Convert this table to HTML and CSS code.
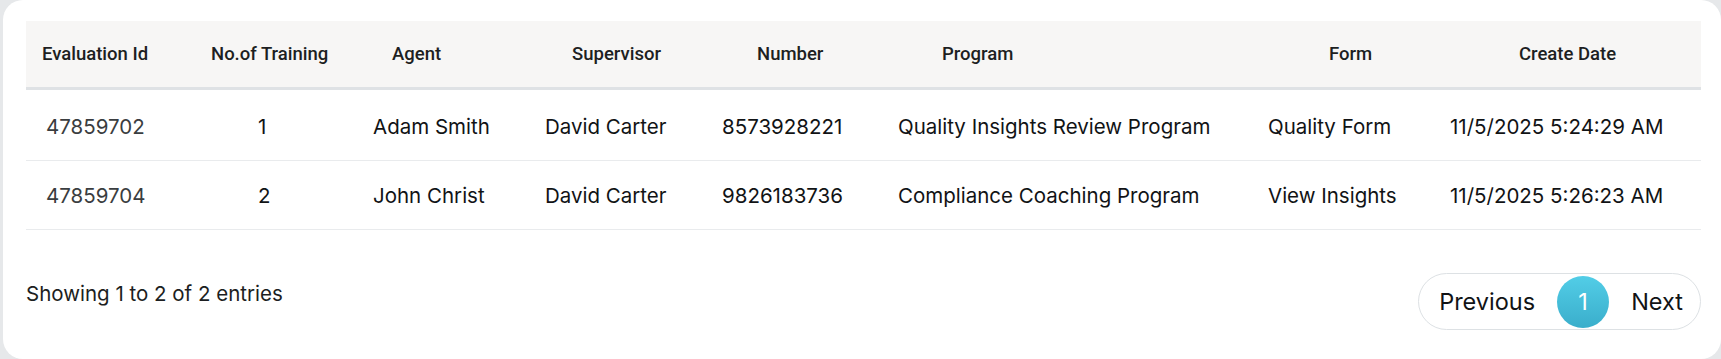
FILE: index.html
```html
<!DOCTYPE html>
<html>
<head>
<meta charset="utf-8">
<link rel="stylesheet" href="styles.css">
</head>
<body>
<div class="card">
  <table class="grid">
    <colgroup>
      <col class="c1"><col class="c2"><col class="c3"><col class="c4"><col class="c5"><col class="c6"><col class="c7"><col class="c8">
    </colgroup>
    <thead>
      <tr>
        <th>Evaluation Id</th>
        <th>No.of Training</th>
        <th>Agent</th>
        <th>Supervisor</th>
        <th>Number</th>
        <th>Program</th>
        <th>Form</th>
        <th>Create Date</th>
      </tr>
    </thead>
    <tbody>
      <tr>
        <td class="id">47859702</td>
        <td>1</td>
        <td>Adam Smith</td>
        <td>David Carter</td>
        <td>8573928221</td>
        <td>Quality Insights Review Program</td>
        <td>Quality Form</td>
        <td>11/5/2025 5:24:29 AM</td>
      </tr>
      <tr>
        <td class="id">47859704</td>
        <td>2</td>
        <td>John Christ</td>
        <td>David Carter</td>
        <td>9826183736</td>
        <td>Compliance Coaching Program</td>
        <td>View Insights</td>
        <td>11/5/2025 5:26:23 AM</td>
      </tr>
    </tbody>
  </table>
  <div class="footer">
    <div class="info">Showing 1 to 2 of 2 entries</div>
    <div class="pager">
      <span class="pg-link">Previous</span>
      <span class="pg-current">1</span>
      <span class="pg-link">Next</span>
    </div>
  </div>
</div>
</body>
</html>
```

FILE: styles.css
```css
html, body {
  margin: 0;
  padding: 0;
  background: #e6e8ea;
}
body {
  width: 1721px;
  height: 359px;
  overflow: hidden;
  font-family: Inter, "Noto Sans", sans-serif;
  color: #16181b;
}
.card {
  margin-left: 3px;
  height: 359px;
  box-sizing: border-box;
  background: #ffffff;
  border-radius: 20px;
  padding: 21px 20px 0 23px;
}
.grid {
  width: 1675px;
  border-collapse: collapse;
  table-layout: fixed;
}
.c1 { width: 168px; }
.c2 { width: 172px; }
.c3 { width: 165px; }
.c4 { width: 170px; }
.c5 { width: 180px; }
.c6 { width: 360px; }
.c7 { width: 180px; }
.c8 { width: 280px; }

.grid th {
  background: #f7f6f5;
  height: 66px;
  padding: 0;
  border-bottom: 3px solid #dfe2e5;
  font-family: Roboto, "Liberation Sans", sans-serif;
  font-weight: 500;
  font-size: 18.5px;
  color: #1d1f22;
  text-align: left;
  white-space: nowrap;
}
.grid td {
  height: 67px;
  padding: 0;
  border-bottom: 1px solid #e9ebed;
  font-size: 20.5px;
  color: #111315;
  text-align: left;
  white-space: nowrap;
}
.grid tbody tr:first-child td {
  height: 68px;
  padding-top: 2px;
}
.grid tbody tr:last-child td {
  height: 68px;
}
.grid td.id { color: #3a3d40; }

/* horizontal text offsets per column (header / body) */
.grid th:nth-child(1) { padding-left: 16px; }
.grid td:nth-child(1) { padding-left: 20px; }
.grid th:nth-child(2) { padding-left: 17px; }
.grid td:nth-child(2) { padding-left: 64px; }
.grid th:nth-child(3) { padding-left: 26px; }
.grid td:nth-child(3) { padding-left: 7px; }
.grid th:nth-child(4) { padding-left: 41px; }
.grid td:nth-child(4) { padding-left: 14px; }
.grid th:nth-child(5) { padding-left: 56px; }
.grid td:nth-child(5) { padding-left: 21px; }
.grid th:nth-child(6) { padding-left: 61px; }
.grid td:nth-child(6) { padding-left: 17px; }
.grid th:nth-child(7) { padding-left: 88px; }
.grid td:nth-child(7) { padding-left: 27px; }
.grid th:nth-child(8) { padding-left: 98px; }
.grid td:nth-child(8) { padding-left: 29px; }

.footer {
  display: flex;
  justify-content: space-between;
  align-items: center;
  margin-top: 43px;
}
.info {
  font-size: 20.5px;
  color: #1c1e21;
  margin-left: 0;
  margin-top: -16px;
}
.pager {
  display: flex;
  align-items: center;
  height: 57px;
  box-sizing: border-box;
  border: 1px solid #dde1e4;
  border-radius: 29px;
  padding: 0 17px 0 20px;
  font-size: 23.5px;
  color: #111315;
}
.pg-link {
  line-height: 1;
}
.pg-current {
  width: 52px;
  height: 52px;
  border-radius: 50%;
  margin: 0 22px;
  display: flex;
  align-items: center;
  justify-content: center;
  color: #ffffff;
  background: linear-gradient(180deg, #52cde7 0%, #3aaecb 100%);
}
```
